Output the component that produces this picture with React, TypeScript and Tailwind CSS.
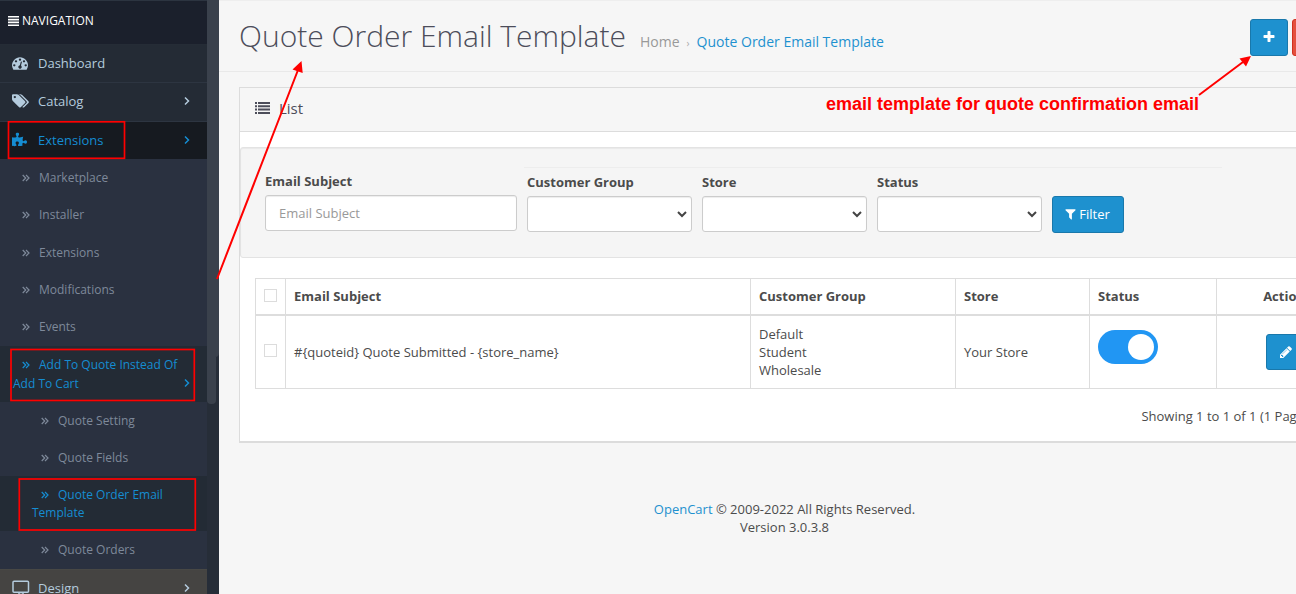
import { useState, type ReactNode } from "react";
import { FaPuzzlePiece, FaTrashAlt } from "react-icons/fa";

function Glyph({ d, box = "0 0 1792 1792", className }: { d: string; box?: string; className?: string }) {
  return (
    <svg viewBox={box} className={className} fill="currentColor" aria-hidden="true">
      <path d={d} />
    </svg>
  );
}

const DASHBOARD =
  "M384 1152q0-53-37.5-90.5t-90.5-37.5-90.5 37.5-37.5 90.5 37.5 90.5 90.5 37.5 90.5-37.5 37.5-90.5zm192-448q0-53-37.5-90.5t-90.5-37.5-90.5 37.5-37.5 90.5 37.5 90.5 90.5 37.5 90.5-37.5 37.5-90.5zm428 481l101-382q6-26-7.5-48.5t-38.5-29.5-48 6.5-30 39.5l-101 382q-60 5-107 43.5t-63 98.5q-20 77 20 146t117 89 146-20 89-117q16-60-6-117t-72-91zm660-33q0-53-37.5-90.5t-90.5-37.5-90.5 37.5-37.5 90.5 37.5 90.5 90.5 37.5 90.5-37.5 37.5-90.5zm-640-640q0-53-37.5-90.5t-90.5-37.5-90.5 37.5-37.5 90.5 37.5 90.5 90.5 37.5 90.5-37.5 37.5-90.5zm448 192q0-53-37.5-90.5t-90.5-37.5-90.5 37.5-37.5 90.5 37.5 90.5 90.5 37.5 90.5-37.5 37.5-90.5zm320 448q0 261-141 483-19 29-54 29h-1402q-35 0-54-29-141-221-141-483 0-182 71-348t191-286 286-191 348-71 348 71 286 191 191 286 71 348z";
const TAGS =
  "M448 448q0-53-37.5-90.5t-90.5-37.5-90.5 37.5-37.5 90.5 37.5 90.5 90.5 37.5 90.5-37.5 37.5-90.5zm1067 576q0 53-37 90l-491 492q-39 37-91 37-53 0-90-37l-715-716q-38-37-64.5-101t-26.5-117v-416q0-52 38-90t90-38h416q53 0 117 26.5t102 64.5l715 714q37 39 37 91zm384 0q0 53-37 90l-491 492q-39 37-91 37-36 0-59-14t-53-45l470-470q37-37 37-90 0-52-37-91l-715-714q-38-38-102-64.5t-117-26.5h224q53 0 117 26.5t102 64.5l715 714q37 39 37 91z";
const PENCIL =
  "M491 1536l91-91-235-235-91 91v107h128v128h107zm523-928q0-22-22-22-10 0-17 7l-542 542q-7 7-7 17 0 22 22 22 10 0 17-7l542-542q7-7 7-17zm-54-192l416 416-832 832h-416v-416zm683 96q0 53-37 90l-166 166-416-416 166-165q36-38 90-38 53 0 91 38l235 234q37 39 37 91z";
const FILTER =
  "M1595 295q17 41-14 70l-493 493v742q0 42-39 59-13 5-25 5-27 0-45-19l-256-256q-19-19-19-45v-486l-493-493q-31-29-14-70 17-39 59-39h1280q42 0 59 39z";
const PLUS =
  "M1600 736v192q0 40-28 68t-68 28h-416v416q0 40-28 68t-68 28h-192q-40 0-68-28t-28-68v-416h-416q-40 0-68-28t-28-68v-192q0-40 28-68t68-28h416v-416q0-40 28-68t68-28h192q40 0 68 28t28 68v416h416q40 0 68 28t28 68z";

function AngleRight({ className }: { className?: string }) {
  return (
    <svg viewBox="0 0 8 10" className={className} fill="none" stroke="currentColor" strokeWidth="1.5" aria-hidden="true">
      <path d="M2 1.500l3.500 3.500-3.500 3.500" />
    </svg>
  );
}

function DoubleAngle() {
  return (
    <svg viewBox="0 0 8 8" className="inline-block h-2 w-2 align-baseline" fill="none" stroke="currentColor" strokeWidth="1.2" aria-hidden="true">
      <path d="M.7 1l3 3-3 3M4 1l3 3-3 3" />
    </svg>
  );
}

function TopItem({ icon, label, arrow, className }: { icon: ReactNode; label: string; arrow?: boolean; className: string }) {
  return (
    <a href="#" className={`flex items-center border-t pr-4 pb-[2px] pl-3 text-[13px] ${className}`}>
      <span className="w-[26px]">{icon}</span>
      <span className="flex-1">{label}</span>
      {arrow && <AngleRight className="h-[10px] w-2" />}
    </a>
  );
}

function SubItem({ label, nested }: { label: string; nested?: boolean }) {
  return (
    <li className="flex flex-1 items-center">
      <a href="#" className={nested ? "pl-[41px]" : "pl-[22px]"}>
        <DoubleAngle />
        <span className="ml-[9px]">{label}</span>
      </a>
    </li>
  );
}

function Sidebar() {
  return (
    <aside className="flex shrink-0">
      <nav className="w-[207px] overflow-hidden bg-[#2a3140] text-xs leading-[18px] text-[#7e899a]">
        <div className="flex h-11 items-center gap-[3px] border-t border-[#2c3440] bg-[#1b202c] pb-1 pl-2 text-xs font-medium text-white">
          <svg viewBox="0 0 11 10" className="h-[10px] w-[11px]" fill="currentColor" aria-hidden="true">
            <path d="M0 0h11v1.6H0zM0 2.8h11v1.6H0zM0 5.6h11v1.6H0zM0 8.4h11V10H0z" />
          </svg>
          NAVIGATION
        </div>
        <TopItem
          label="Dashboard"
          className="h-[38px] border-[#252c36] bg-[#242b35] text-[#b4cbdd]"
          icon={<Glyph d={DASHBOARD} className="h-4 w-4" />}
        />
        <TopItem
          label="Catalog"
          arrow
          className="h-[39px] border-[#2d3541] bg-[#242b35] text-[#b4cbdd]"
          icon={<Glyph d={TAGS} box="0 0 1920 1792" className="h-4 w-[17px]" />}
        />
        <TopItem
          label="Extensions"
          arrow
          className="h-[38px] border-[#2d3541] bg-[#161a20] text-[#158dd2]"
          icon={<FaPuzzlePiece className="h-[15px] w-[15px]" />}
        />
        <ul className="flex h-[187px] flex-col">
          <SubItem label="Marketplace" />
          <SubItem label="Installer" />
          <SubItem label="Extensions" />
          <SubItem label="Modifications" />
          <SubItem label="Events" />
        </ul>
        <a href="#" className="flex items-end bg-[#232b35] py-[9px] pr-4 pl-[13px] text-[#158dd2]">
          <span className="flex-1 indent-[9px] leading-[19px]">
            <DoubleAngle />
            <span className="ml-[9px]">Add To Quote Instead Of Add To Cart</span>
          </span>
          <AngleRight className="mb-[5px] h-[10px] w-2" />
        </a>
        <ul className="flex h-[74px] flex-col">
          <SubItem label="Quote Setting" nested />
          <SubItem label="Quote Fields" nested />
        </ul>
        <a href="#" className="block bg-[#232b35] pt-[10px] pr-7 pb-[9px] pl-8 indent-[9px] text-[#158dd2]">
          <DoubleAngle />
          <span className="ml-[9px]">Quote Order Email Template</span>
        </a>
        <ul className="flex h-[38px] flex-col">
          <SubItem label="Quote Orders" nested />
        </ul>
        <TopItem
          label="Design"
          arrow
          className="h-[38px] border-[#484845] bg-[#454442] text-[#b4cbdd]"
          icon={
            <svg viewBox="0 0 18 16" className="h-4 w-[18px]" fill="none" stroke="currentColor" strokeWidth="1.5" aria-hidden="true">
              <rect x="1" y="1.2" width="15.5" height="11" rx="1" />
              <path d="M7 12.5v2h4v-2M5 15h8" />
            </svg>
          }
        />
      </nav>
      <div className="w-3 bg-[#262d38]">
        <div className="h-[357px] rounded-br bg-[#3a414c]" />
        <div className="h-[47px] w-[9px] rounded-b bg-[#3a414c]" />
      </div>
    </aside>
  );
}

function FilterSelect({ id, label }: { id: string; label: string }) {
  return (
    <div className="w-[165px]">
      <label htmlFor={id} className="mb-1 block leading-[19px] font-bold">
        {label}
      </label>
      <div className="relative">
        <select id={id} className="block h-9 w-full appearance-none rounded-[3px] border border-[#ccc] bg-white px-3 shadow-[inset_0_1px_1px_rgba(0,0,0,0.075)]">
          <option value="" />
        </select>
        <svg viewBox="0 0 10 7" className="pointer-events-none absolute top-[15px] right-[5px] h-[7px] w-[10px]" fill="none" stroke="#444" strokeWidth="2" aria-hidden="true">
          <path d="M1 1l4 4 4-4" />
        </svg>
      </div>
    </div>
  );
}

function Tick({ label }: { label: string }) {
  return (
    <input
      type="checkbox"
      aria-label={label}
      className="mb-[2px] block h-[13px] w-[13px] appearance-none border border-[#dcdcdc] bg-white checked:bg-[#1e91cf]"
    />
  );
}

function TemplateTable() {
  const [enabled, setEnabled] = useState(true);
  const cell = "border border-[#ddd] px-2";
  return (
    <table className="w-full table-fixed border-collapse text-left">
      <colgroup>
        <col className="w-[30px]" />
        <col className="w-[465px]" />
        <col className="w-[205px]" />
        <col className="w-[134px]" />
        <col className="w-[127px]" />
        <col />
      </colgroup>
      <thead>
        <tr className="h-9 border-b-2 border-[#ddd]">
          <th className={cell}>
            <Tick label="Select all" />
          </th>
          <th className={cell}>Email Subject</th>
          <th className={cell}>Customer Group</th>
          <th className={cell}>Store</th>
          <th className={cell}>Status</th>
          <th className={`${cell} text-right`}>Action</th>
        </tr>
      </thead>
      <tbody>
        <tr className="h-[74px]">
          <td className={cell}>
            <Tick label="Select template" />
          </td>
          <td className={cell}>{"#{quoteid} Quote Submitted - {store_name}"}</td>
          <td className={`${cell} leading-[18px]`}>
            Default
            <br />
            Student
            <br />
            Wholesale
          </td>
          <td className={cell}>Your Store</td>
          <td className={`${cell} pb-[10px]`}>
            <button
              type="button"
              role="switch"
              aria-checked={enabled}
              aria-label="Status"
              onClick={() => setEnabled(!enabled)}
              className={`flex h-[34px] w-[60px] items-center rounded-full px-1 ${enabled ? "justify-end bg-[#2196f3]" : "justify-start bg-[#ccc]"}`}
            >
              <span className="h-[26px] w-[26px] rounded-full bg-white" />
            </button>
          </td>
          <td className={cell}>
            <button type="button" aria-label="Edit" className="ml-auto flex h-9 w-[39px] items-center justify-center rounded-[3px] border border-[#1978ab] bg-[#1e91cf] text-white">
              <Glyph d={PENCIL} className="h-[14px] w-[14px]" />
            </button>
          </td>
        </tr>
      </tbody>
    </table>
  );
}

function Annotations() {
  return (
    <div className="pointer-events-none absolute inset-0">
      <svg className="absolute top-0 left-0 h-[594px] w-[1296px]" fill="none" stroke="#f00" strokeWidth="2" aria-hidden="true">
        <rect x="8.500" y="121.800" width="116" height="36.500" strokeWidth="1.700" />
        <rect x="11" y="349.500" width="183.300" height="51" strokeWidth="1.700" />
        <rect x="19.300" y="479" width="176" height="51" strokeWidth="1.700" />
        <path d="M217 279L298 70M1199 95l44-33" />
        <path d="M301.500 61l1.200 12-10.200-3.500zM1251 56l-5 10.500-6.500-8z" fill="#f00" stroke="none" />
      </svg>
      <p className="absolute top-[93px] left-[826px] font-['Liberation_Sans',sans-serif] text-lg leading-[22px] font-bold whitespace-nowrap text-[#f00]">
        email template for quote confirmation email
      </p>
    </div>
  );
}

export default function App() {
  return (
    <div className="relative flex h-screen overflow-hidden bg-[#f6f6f6] font-['Open_Sans',sans-serif] text-[13px] leading-[18px] text-[#4c4d5a]">
      <Sidebar />
      <main className="min-w-0 flex-1 overflow-hidden border-t border-[#eee]">
        <div className="-mr-[54px]">
          <header className="flex h-[71px] items-start border-b border-[#e9e9e9] px-5 pt-[18px]">
            <div className="flex flex-1 items-baseline">
              <h1 className="text-[30px] leading-[34px] font-light">Quote Order Email Template</h1>
              <nav aria-label="Breadcrumb" className="ml-[14px] flex items-baseline gap-[7px] text-sm">
                <a href="#" className="text-[#999]">Home</a>
                <span className="text-[10px] text-[#aaa]">›</span>
                <a href="#" className="text-[#1e91cf]">Quote Order Email Template</a>
              </nav>
            </div>
            <div className="flex gap-1">
              <button type="button" aria-label="Add New" className="flex h-[37px] w-[38px] items-center justify-center rounded-[3px] border border-[#1978ab] bg-[#1e91cf] pb-[2px] text-white">
                <Glyph d={PLUS} className="h-[14px] w-[14px]" />
              </button>
              <button type="button" aria-label="Delete" className="flex h-[37px] w-[38px] items-center justify-center rounded-[3px] border border-[#d1301e] bg-[#e4503e] text-white">
                <FaTrashAlt />
              </button>
            </div>
          </header>

          <div className="px-5 pt-[15px]">
            <section className="border border-b-2 border-[#dcdcdc] bg-white text-[#4b4b4b]">
              <div className="flex h-11 items-center gap-[9px] border-b border-[#dcdcdc] bg-[#f6f6f6] px-[15px] pb-[3px] text-[#4c4d5a]">
                <svg viewBox="0 0 15 12" className="h-3 w-[15px]" fill="currentColor" aria-hidden="true">
                  <path d="M0 0h2v2H0zM3 0h12v2H3zM0 3.300h2v2H0zM3 3.300h12v2H3zM0 6.600h2v2H0zM3 6.600h12v2H3zM0 10h2v2H0zM3 10h12v2H3z" />
                </svg>
                <h2 className="text-[15px]">List</h2>
              </div>

              <form
                onSubmit={(e) => e.preventDefault()}
                className="mt-[15px] flex h-[111px] items-start rounded-[3px] border border-[#e3e3e3] bg-[#f5f5f5] pt-[19px] pl-6 shadow-[inset_0_1px_1px_rgba(0,0,0,0.05)]"
              >
                <div className="w-[252px] pt-[5px]">
                  <label htmlFor="subject" className="mb-1 block leading-[19px] font-bold">
                    Email Subject
                  </label>
                  <input
                    id="subject"
                    type="text"
                    placeholder="Email Subject"
                    className="block h-9 w-full rounded-[3px] border border-[#ccc] bg-white px-[13px] shadow-[inset_0_1px_1px_rgba(0,0,0,0.075)] placeholder:text-[#999]"
                  />
                </div>
                <div className="ml-[7px] flex w-[698px] gap-[10px] border-t border-[#ededed] pt-[5px] pl-[3px]">
                  <FilterSelect id="group" label="Customer Group" />
                  <FilterSelect id="store" label="Store" />
                  <FilterSelect id="status" label="Status" />
                  <button type="submit" className="mt-[23px] flex h-[37px] w-[72px] items-center justify-center gap-[2px] rounded-[3px] border border-[#1978ab] bg-[#1e91cf] pr-[2px] pb-[2px] text-white">
                    <Glyph d={FILTER} className="h-[14px] w-[13px]" />
                    Filter
                  </button>
                </div>
              </form>

              <div className="px-[15px] pt-5 pb-4">
                <TemplateTable />
                <p className="mt-[18px] text-right">Showing 1 to 1 of 1 (1 Pages)</p>
              </div>
            </section>
          </div>

          <footer className="pt-[57px] text-center text-[#4b4b4b]">
            <a href="#" className="text-[#1e91cf]">OpenCart</a> © 2009-2022 All Rights Reserved.
            <br />
            Version 3.0.3.8
          </footer>
        </div>
      </main>
      <Annotations />
    </div>
  );
}
